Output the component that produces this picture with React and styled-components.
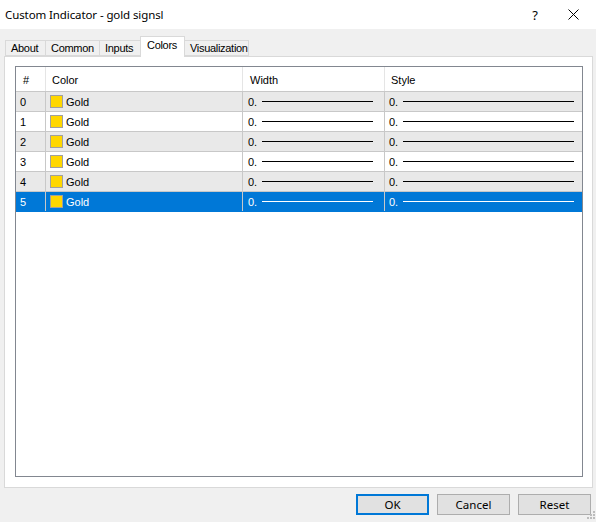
import React from "react";
import styled, { createGlobalStyle } from "styled-components";

const GlobalStyle = createGlobalStyle`
  html, body {
    margin: 0;
    padding: 0;
    background: #f0f0f0;
  }
  body {
    font-family: "Liberation Sans", Arial, sans-serif;
    font-size: 11px;
    color: #000;
  }
`;

const Window = styled.div`
  width: 596px;
  height: 522px;
  display: flex;
  flex-direction: column;
  background: #f0f0f0;
  position: relative;
  overflow: hidden;
`;

const TitleBar = styled.div`
  height: 29px;
  background: #fff;
  display: flex;
  align-items: center;
  padding-left: 5px;
`;

const Title = styled.div`
  flex: 1;
  font-family: "Noto Sans", "Open Sans", sans-serif;
  font-size: 11.5px;
  letter-spacing: -0.1px;
`;

const CaptionButton = styled.div`
  width: ${(p) => p.w}px;
  height: 29px;
  display: flex;
  align-items: center;
  justify-content: center;
  font-family: "Noto Sans", sans-serif;
  font-size: 13px;
`;

const TabStrip = styled.div`
  display: flex;
  align-items: flex-end;
  margin-top: 7px;
  padding-left: 5px;
  height: 20px;
`;

const Tab = styled.div`
  width: ${(p) => p.w}px;
  height: ${(p) => (p.active ? 21 : 16)}px;
  margin-bottom: ${(p) => (p.active ? -1 : 0)}px;
  padding: ${(p) => (p.active ? "2px 0 0 6px" : "0 0 0 5px")};
  box-sizing: border-box;
  display: flex;
  align-items: ${(p) => (p.active ? "flex-start" : "center")};
  border: 1px solid #d9d9d9;
  border-bottom: ${(p) => (p.active ? "none" : "1px solid #d9d9d9")};
  border-left: ${(p) => (p.first || p.active ? "1px solid #d9d9d9" : "none")};
  border-right: ${(p) => (p.beforeActive ? "none" : "1px solid #d9d9d9")};
  background: ${(p) => (p.active ? "#fff" : "#f0f0f0")};
  position: relative;
  z-index: ${(p) => (p.active ? 2 : 1)};
  white-space: nowrap;
  letter-spacing: -0.3px;
`;

const Panel = styled.div`
  margin: 0 3px 0 4px;
  height: 432px;
  box-sizing: border-box;
  background: #fff;
  border: 1px solid #d9d9d9;
  padding: 9px 9px 10px 10px;
  display: flex;
  position: relative;
  z-index: 1;
`;

const Table = styled.div`
  flex: 1;
  border: 1px solid #828790;
  background: #fff;
`;

const Row = styled.div`
  display: grid;
  grid-template-columns: 30px 197px 142px 1fr;
  height: ${(p) => (p.header ? 25 : 20)}px;
  box-sizing: border-box;
  border-bottom: 1px solid ${(p) => (p.selected ? "#0078d7" : "#c8c8c8")};
  background: ${(p) =>
    p.selected ? "#0078d7" : p.header ? "#fff" : p.even ? "#e9e9e9" : "#fff"};
  color: ${(p) => (p.selected ? "#fff" : "#000")};
`;

const Cell = styled.div`
  display: flex;
  align-items: center;
  box-sizing: border-box;
  padding-left: ${(p) => p.pl || 6}px;
  padding-right: ${(p) => p.pr || 0}px;
  padding-top: ${(p) => (p.header ? 1 : 0)}px;
  border-right: 1px solid ${(p) => (p.header ? "#e5e5e5" : "#c8c8c8")};
  &:last-child {
    border-right: none;
  }
`;

const Swatch = styled.span`
  width: 11px;
  height: 11px;
  background: #ffd700;
  border: 1px solid #a0a0a0;
  margin-right: 3px;
  flex-shrink: 0;
`;

const Line = styled.span`
  flex: 1;
  height: 1px;
  margin-left: 5px;
  background: ${(p) => (p.light ? "#fff" : "#000")};
`;

const Footer = styled.div`
  display: flex;
  justify-content: flex-end;
  gap: 8px;
  padding: 6px 5px 0 0;
`;

const Button = styled.div`
  width: 73px;
  height: 21px;
  box-sizing: border-box;
  display: flex;
  align-items: center;
  justify-content: center;
  background: #e1e1e1;
  border: ${(p) => (p.primary ? "2px solid #0078d7" : "1px solid #adadad")};
  font-family: "Noto Sans", sans-serif;
  font-size: 11.5px;
`;

const Grip = styled.svg`
  position: absolute;
  right: 1px;
  bottom: 1px;
`;

const tabs = [
  { label: "About", w: 41 },
  { label: "Common", w: 54 },
  { label: "Inputs", w: 40 },
  { label: "Colors", w: 45 },
  { label: "Visualization", w: 64 },
];
const activeTab = 3;
const rows = [0, 1, 2, 3, 4, 5];

export default function App() {
  return (
    <Window>
      <GlobalStyle />
      <TitleBar>
        <Title>Custom Indicator - gold signsl</Title>
        <CaptionButton w={30}>?</CaptionButton>
        <CaptionButton w={46}>
          <svg width="11" height="11" viewBox="0 0 11 11">
            <path d="M0.5 0.5 L10.5 10.5 M10.5 0.5 L0.5 10.5" stroke="#000" strokeWidth="1" />
          </svg>
        </CaptionButton>
      </TitleBar>
      <TabStrip>
        {tabs.map((t, i) => (
          <Tab
            key={t.label}
            w={t.w}
            first={i === 0}
            active={i === activeTab}
            beforeActive={i === activeTab - 1}
          >
            {t.label}
          </Tab>
        ))}
      </TabStrip>
      <Panel>
        <Table>
          <Row header>
            <Cell header pl={7}>#</Cell>
            <Cell header pl={6}>Color</Cell>
            <Cell header pl={7}>Width</Cell>
            <Cell header pl={6}>Style</Cell>
          </Row>
          {rows.map((n) => {
            const sel = n === 5;
            return (
              <Row key={n} even={n % 2 === 0} selected={sel}>
                <Cell pl={4}>{n}</Cell>
                <Cell pl={4}>
                  <Swatch />
                  Gold
                </Cell>
                <Cell pl={5} pr={11}>
                  0.
                  <Line light={sel} />
                </Cell>
                <Cell pl={4} pr={8}>
                  0.
                  <Line light={sel} />
                </Cell>
              </Row>
            );
          })}
        </Table>
      </Panel>
      <Footer>
        <Button primary>OK</Button>
        <Button>Cancel</Button>
        <Button>Reset</Button>
      </Footer>
      <Grip width="10" height="10" viewBox="0 0 10 10">
        {[
          [8, 0],
          [8, 3],
          [5, 3],
          [8, 6],
          [5, 6],
          [2, 6],
        ].map(([x, y]) => (
          <rect key={`${x}-${y}`} x={x} y={y} width="2" height="2" fill="#bcbcbc" />
        ))}
      </Grip>
    </Window>
  );
}
